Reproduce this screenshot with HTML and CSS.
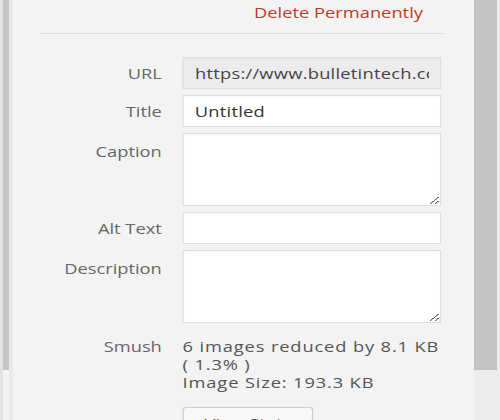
FILE: index.html
```html
<!DOCTYPE html>
<html>
<head>
	<title>Attachment Details</title>
	<meta charset="utf-8">
	<meta name="viewport" content="width=device-width, initial-scale=1">
	<link rel="stylesheet" href="styles.css">
</head>
<body>
  <div class="frame">
    <div class="left-rail"><div class="left-thumb"></div></div>

    <!-- the capture is stretched sideways, so the panel is drawn narrow and widened -->
    <div class="panel">
      <div class="actions">
        <a href="#" class="delete-link">Delete Permanently</a>
      </div>
      <hr class="divider">

      <div class="row">
        <label class="name" for="url">URL</label>
        <input type="text" id="url" class="field readonly" value="https://www.bulletintech.com/wp-content/uploads/" readonly>
      </div>
      <div class="row">
        <label class="name" for="title">Title</label>
        <input type="text" id="title" class="field" value="Untitled">
      </div>
      <div class="row">
        <label class="name top" for="caption">Caption</label>
        <textarea id="caption" class="field area"></textarea>
      </div>
      <div class="row">
        <label class="name" for="alt">Alt Text</label>
        <input type="text" id="alt" class="field">
      </div>
      <div class="row">
        <label class="name top" for="description">Description</label>
        <textarea id="description" class="field area"></textarea>
      </div>

      <div class="row smush">
        <span class="name">Smush</span>
        <div class="smush-info">
          <div class="line">6 images reduced by 8.1 KB</div>
          <div class="line">( 1.3% )</div>
          <div class="line">Image Size: 193.3 KB</div>
          <button class="stats-btn">View Stats</button>
        </div>
      </div>
    </div>

    <div class="right-rail"><div class="right-thumb"></div></div>
  </div>
</body>
</html>
```

FILE: styles.css
```css
body {
	margin: 0;
	padding: 0;
	background-color: #f3f3f3;
	font-family: "Open Sans", Arial, sans-serif;
	font-size: 15px;
	color: #666;
	overflow: hidden;
}
.frame {
	display: flex;
	height: 420px;
	overflow: hidden;
}
.left-rail {
	flex: none;
	width: 13px;
	background: linear-gradient(to right, #e2e2e2 0 3px, transparent 3px 9px, #e8e8e8 9px);
}
.left-thumb {
	margin-left: 3px;
	width: 6px;
	height: 370px;
	background-color: #c6c6c6;
}
.panel {
	flex: none;
	box-sizing: border-box;
	width: 378px;
	padding: 0 25px 0 23px;
	transform: scaleX(1.22);
	transform-origin: left top;
}
.right-rail {
	flex: none;
	margin-left: auto;
	width: 26px;
	background-color: #ececec;
}
.right-thumb {
	width: 23px;
	height: 370px;
	background-color: #c3c3c3;
}
.actions {
	text-align: right;
	padding-right: 17px;
	height: 24px;
	line-height: 24px;
	white-space: nowrap;
}
.delete-link {
	color: #c0392b;
	text-decoration: none;
}
.divider {
	border: none;
	border-top: 1px solid #dcdcdc;
	margin: 9px 0 23px;
}
.row {
	display: grid;
	grid-template-columns: 99px 1fr;
	column-gap: 17px;
	margin-bottom: 6px;
	margin-right: 2px;
}
.name {
	text-align: right;
	line-height: 32px;
	white-space: nowrap;
}
.name.top {
	padding-top: 2px;
}
.field {
	box-sizing: border-box;
	width: 100%;
	height: 32px;
	margin: 0;
	padding: 0 9px;
	border: 1px solid #dedede;
	background-color: #fff;
	box-shadow: inset 0 1px 2px rgba(0, 0, 0, 0.04);
	font-family: inherit;
	font-size: 15px;
	letter-spacing: 0.2px;
	color: #333;
	outline: none;
}
.field.readonly {
	background-color: #ececec;
	color: #444;
}
.field.area {
	height: 73px;
	resize: vertical;
	padding: 6px 9px;
}
.smush {
	margin-top: 14px;
}
.smush .name,
.smush-info .line {
	line-height: 18px;
}
.smush-info {
	color: #555;
	letter-spacing: 0.7px;
	white-space: nowrap;
}
.stats-btn {
	display: block;
	margin-top: 16px;
	width: 107px;
	height: 32px;
	background-color: #f7f7f7;
	border: 1px solid #cccccc;
	border-radius: 3px;
	font-family: inherit;
	font-size: 15px;
	color: #555;
}
```
